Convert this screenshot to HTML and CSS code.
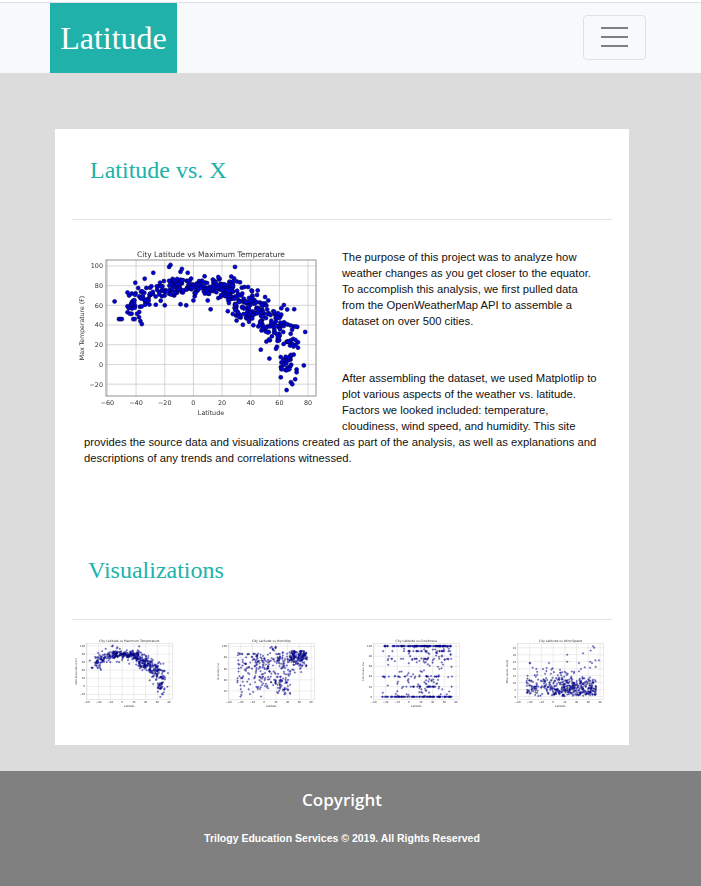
FILE: index.html
```html
<!DOCTYPE html>
<html lang="en">
    <head>
        <meta charset="utf-8">
        <meta name="viewport" content="width=device-width, initial-scale=1.0" />
        <title>Latitude</title>
        <link rel="stylesheet" href="styles.css">
    </head>
    <body>
        <header class="page-top">
            <nav class="navbar">
                <a class="brand" href="#">Latitude</a>
                <button class="toggler" type="button" aria-label="Toggle navigation">
                    <span class="toggler-bar"></span>
                    <span class="toggler-bar"></span>
                    <span class="toggler-bar"></span>
                </button>
            </nav>
        </header>
        <main class="card">
            <h2 class="section-title">Latitude vs. X</h2>
            <hr class="rule">
            <div class="summary">
                <div class="plot plot-main" data-plot="temp"></div>
                <p>The purpose of this project was to analyze how weather changes as you get closer to the equator. To accomplish this analysis, we first pulled data from the OpenWeatherMap API to assemble a dataset on over 500 cities.</p>
                <p class="summary-next">After assembling the dataset, we used Matplotlip to plot various aspects of the weather vs. latitude. Factors we looked included: temperature, cloudiness, wind speed, and humidity. This site provides the source data and visualizations created as part of the analysis, as well as explanations and descriptions of any trends and correlations witnessed.</p>
            </div>
            <h2 class="section-title section-title-viz">Visualizations</h2>
            <hr class="rule">
            <div class="thumbs">
                <div class="plot plot-thumb" data-plot="temp"></div>
                <div class="plot plot-thumb" data-plot="humidity"></div>
                <div class="plot plot-thumb" data-plot="cloud"></div>
                <div class="plot plot-thumb" data-plot="wind"></div>
            </div>
        </main>
        <footer class="footer">
            <h3>Copyright</h3>
            <p>Trilogy Education Services &copy; 2019. All Rights Reserved</p>
        </footer>
        <script src="plots.js"></script>
    </body>
</html>
```

FILE: styles.css
```css
body {
    margin: 0;
    background: #dcdcdc;
    font-family: "Liberation Sans", Arial, sans-serif;
}

.page-top {
    padding-top: 2px;
    background: #fff;
}
.navbar {
    display: flex;
    justify-content: space-between;
    align-items: center;
    height: 70px;
    padding: 0 55px 0 50px;
    background: #f8f9fa;
    border-top: 1px solid #dcdfe3;
}
.brand {
    display: block;
    width: 127px;
    height: 70px;
    background: #20b2aa;
    color: #fff;
    font-family: "Liberation Serif", Georgia, serif;
    font-size: 32px;
    line-height: 70px;
    text-align: center;
    text-decoration: none;
}
.toggler {
    display: flex;
    flex-direction: column;
    justify-content: center;
    gap: 7px;
    width: 63px;
    height: 45px;
    margin-top: -2px;
    padding: 0 17px;
    background: transparent;
    border: 1px solid #e0e1e2;
    border-radius: 4px;
}
.toggler-bar {
    display: block;
    width: 27px;
    height: 2px;
    background: #7f7f7f;
}

.card {
    width: 574px;
    height: 616px;
    margin: 56px 0 26px 55px;
    padding-top: 1px;
    box-sizing: border-box;
    background: #fff;
}
.section-title {
    margin: 24px 0 0 35px;
    color: #20b2aa;
    font-family: "Liberation Serif", Georgia, serif;
    font-size: 24px;
    font-weight: 400;
    line-height: 32px;
}
.section-title-viz {
    margin-left: 33px;
}
.rule {
    margin: 33px 17px 0;
    border: 0;
    border-top: 1px solid #e2e2e2;
}

.summary {
    height: 310px;
    padding: 29px 29px 0;
    box-sizing: border-box;
    color: #111;
    font-size: 11.25px;
    line-height: 16px;
}
.summary p {
    margin: 0;
}
.summary-next {
    padding-top: 41px;
}

.plot svg {
    display: block;
    width: 100%;
    height: 100%;
    font-family: "DejaVu Sans", sans-serif;
}
.plot-main {
    float: left;
    width: 244px;
    height: 168px;
    margin: 0 22px 10px -8px;
    filter: blur(.5px);
}
.thumbs {
    display: grid;
    grid-template-columns: repeat(4, 143.5px);
    padding: 19px 0 0 19px;
}
.plot-thumb {
    width: 100px;
    height: 69px;
    filter: blur(.7px);
}
.plot-thumb:nth-child(2) {
    margin-left: -2px;
}
.plot-thumb circle {
    fill-opacity: .5;
}
.plot-thumb rect {
    stroke: #bbb;
}

.footer {
    height: 115px;
    padding: 17px 17px 0 0;
    box-sizing: border-box;
    background: #808080;
    color: #fff;
    text-align: center;
}
.footer h3 {
    margin: 0;
    font-family: "Open Sans", "Noto Sans", sans-serif;
    font-size: 17px;
    font-weight: 600;
    line-height: 24px;
}
.footer p {
    margin: 19px 0 0;
    font-size: 10.5px;
    font-weight: 700;
    line-height: 14px;
}
```

FILE: plots.js
```js
// scatter charts, drawn the way matplotlib drew the originals
var seed = 1;
function rnd() {
    seed = (seed * 16807) % 2147483647;
    return seed / 2147483647;
}
function gauss() {
    return (rnd() + rnd() + rnd() + rnd() - 2) * 1.7;
}

// lat is denser in the northern half, like real city lists
function lat() {
    var r = rnd();
    if (r < .13) return -46 + rnd() * 28;
    if (r < .4) return -18 + rnd() * 36;
    if (r < .78) return 18 + rnd() * 34;
    return 50 + rnd() * 23;
}

function tempAt(x) {
    if (x < -18) return 62 + (x + 45) * .5;
    if (x < 18) return 79;
    if (x < 50) return 79 - (x - 18) * 1;
    return 44 - (x - 50) * .6;
}

var outliers = [[-55, 64], [-52, 46], [-51, 46], [-50, 46], [-46, 59], [-46, 53], [-46, 73], [-43, 72], [-42, 46], [-41, 46],
    [-38, 48], [-37, 44], [-36, 41], [-34, 87], [-28, 93], [-17, 99], [-16, 101], [-9, 94], [-8, 97], [-4, 93], [29, 99],
    [-5, 60], [-9, 61], [0, 65], [10, 65], [12, 56], [-20, 60], [24, 54], [53, 6], [47, 15], [50, 62], [78, 33], [77, -1],
    [73, 17], [61, -13], [65, -26], [68, -18], [69, -20], [71, -15], [72, -5], [72, -8], [66, -5], [63, 5], [65, 6], [70, 10]];

var charts = {
    temp: {
        seed: 11,
        title: "City Latitude vs Maximum Temperature",
        label: "Max Temperature (F)",
        yMin: -32, yMax: 106, ticks: [-20, 0, 20, 40, 60, 80, 100],
        points: function () {
            var list = outliers.slice();
            for (var i = 0; i < 480; i++) {
                var x = lat();
                var spread = x > 25 ? 10 : (x < -18 ? 8 : 5);
                var y = tempAt(x) + gauss() * spread;
                // far north splits off into its own cold cluster
                if (x > 60 && rnd() < .35) y = -8 + rnd() * 18;
                list.push([x, y]);
            }
            return list;
        }
    },
    humidity: {
        seed: 23,
        title: "City Latitude vs Humidity",
        label: "Humidity (%)",
        yMin: 5, yMax: 105, ticks: [20, 40, 60, 80, 100],
        points: function () {
            var list = [];
            for (var i = 0; i < 460; i++) {
                var x = lat();
                var y = 88 - Math.abs(gauss()) * 34;
                if (x > 45) y = 92 - Math.abs(gauss()) * 14;
                if (x > 22 && x < 45) y = 90 - rnd() * 78;
                if (x > 10 && x <= 22) y = 100 - rnd() * 70;
                list.push([x, Math.max(10, y)]);
            }
            return list;
        }
    },
    cloud: {
        seed: 37,
        title: "City Latitude vs Cloudiness",
        label: "Cloudiness (%)",
        yMin: -5, yMax: 105, ticks: [0, 20, 40, 60, 80, 100],
        points: function () {
            var bands = [100, 100, 100, 100, 90, 75, 40, 20, 0, 0, 0, 0];
            var list = [];
            for (var i = 0; i < 430; i++) {
                var y = rnd() < .75 ? bands[Math.floor(rnd() * bands.length)] : rnd() * 100;
                list.push([lat(), y]);
            }
            return list;
        }
    },
    wind: {
        seed: 41,
        title: "City Latitude vs Wind Speed",
        label: "Wind Speed (mph)",
        yMin: -2, yMax: 38, ticks: [0, 5, 10, 15, 20, 25, 30, 35],
        points: function () {
            var list = [[24, 30], [24, 25], [51, 31], [64, 33], [68, 36], [70, 35], [72, 26], [78, 26], [63, 25], [-40, 24], [-39, 24]];
            for (var i = 0; i < 440; i++) {
                var y = Math.abs(gauss()) * 8 + rnd() * 2;
                list.push([lat(), Math.min(y, 24)]);
            }
            return list;
        }
    }
};

function drawChart(chart) {
    var left = 30, top = 11, width = 210, height = 136;
    var sx = function (x) { return left + (x + 61) * 1.433; };
    var sy = function (y) { return top + height - (y - chart.yMin) / (chart.yMax - chart.yMin) * height; };
    var s = '<svg viewBox="0 0 244 168" xmlns="http://www.w3.org/2000/svg">';
    seed = chart.seed;

    // grid and y ticks
    chart.ticks.forEach(function (t) {
        s += '<line x1="' + left + '" x2="' + (left + width) + '" y1="' + sy(t) + '" y2="' + sy(t) + '" stroke="#c4c4c4" stroke-width=".7"/>';
        s += '<text x="' + (left - 3) + '" y="' + (sy(t) + 2.4) + '" text-anchor="end" font-size="6.4" fill="#333">' + String(t).replace("-", "\u2212") + '</text>';
    });
    [-60, -40, -20, 0, 20, 40, 60, 80].forEach(function (t) {
        s += '<line x1="' + sx(t) + '" x2="' + sx(t) + '" y1="' + top + '" y2="' + (top + height) + '" stroke="#c4c4c4" stroke-width=".7"/>';
        s += '<text x="' + sx(t) + '" y="' + (top + height + 9) + '" text-anchor="middle" font-size="6.4" fill="#333">' + String(t).replace("-", "\u2212") + '</text>';
    });

    chart.points().forEach(function (p) {
        s += '<circle cx="' + sx(p[0]).toFixed(1) + '" cy="' + sy(p[1]).toFixed(1) + '" r="2" fill="#0000e0" stroke="#00004a" stroke-width=".6"/>';
    });

    s += '<rect x="' + left + '" y="' + top + '" width="' + width + '" height="' + height + '" fill="none" stroke="#777" stroke-width=".8"/>';
    s += '<text x="' + (left + width / 2) + '" y="7.5" text-anchor="middle" font-size="7.5" fill="#333">' + chart.title + '</text>';
    s += '<text x="' + (left + width / 2) + '" y="166" text-anchor="middle" font-size="6.4" fill="#333">Latitude</text>';
    s += '<text transform="translate(8 ' + (top + height / 2) + ') rotate(-90)" text-anchor="middle" font-size="6.2" fill="#333">' + chart.label + '</text>';
    return s + '</svg>';
}

document.querySelectorAll(".plot").forEach(function (el) {
    el.innerHTML = drawChart(charts[el.dataset.plot]);
});
```
